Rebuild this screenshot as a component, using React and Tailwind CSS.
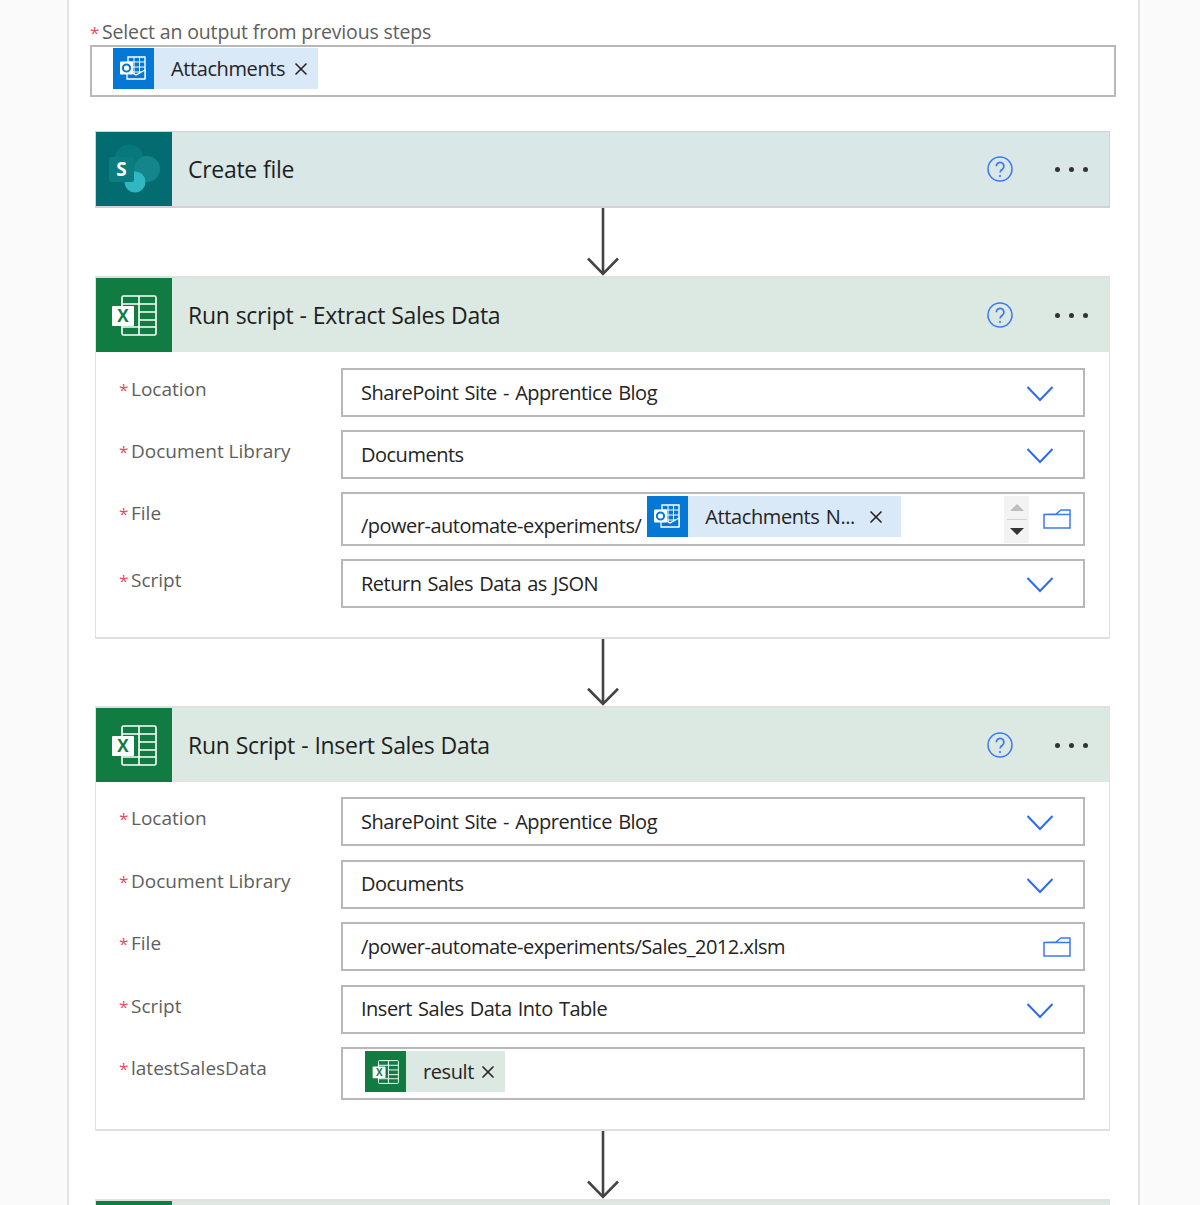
import { X } from 'lucide-react';

const OutlookIcon = ({ className }) => (
  <svg viewBox="0 0 41 41" className={className}>
    <rect width="41" height="41" fill="#0478d4" />
    <g fill="none" stroke="#fff" strokeWidth="1.4">
      <path d="M15 9h17v21H15z" />
      <path d="M21 9v21M26.5 9v21M15 14h17M15 19h17M15 24h17" strokeWidth="1" />
    </g>
    <path d="M14 31V22l9 5 9-5v9H14z" fill="#0478d4" stroke="#fff" strokeWidth="1.3" />
    <rect x="7" y="13.5" width="13" height="13" rx="1" fill="#fff" />
    <circle cx="13.5" cy="20" r="3.6" fill="none" stroke="#0478d4" strokeWidth="2" />
  </svg>
);

const ExcelMark = ({ className }) => (
  <svg viewBox="0 0 46 41" className={className}>
    <g fill="none" stroke="#fff" strokeWidth="1.6">
      <rect x="11" y="1" width="34" height="39" rx="1.5" />
      <path d="M28 1v39M28 9h17M28 17h17M28 25h17M28 32h17M11 32h17M11 9h17" />
    </g>
    <rect x="1" y="11" width="22" height="20" rx="1" fill="#fff" />
    <text x="12" y="27" textAnchor="middle" fontSize="17" fontWeight="700" fill="#107c41" fontFamily="'Open Sans', sans-serif">X</text>
  </svg>
);

const SharePointIcon = ({ className }) => (
  <svg viewBox="0 0 76 74" className={className}>
    <rect width="76" height="74" fill="#036c70" />
    <circle cx="33" cy="27" r="14.5" fill="#07787c" />
    <circle cx="51" cy="37" r="13" fill="#14868b" />
    <circle cx="39" cy="50" r="10.5" fill="#2fb8c2" />
    <rect x="13" y="25" width="25" height="25" rx="2" fill="#0b7d81" />
    <text x="25.5" y="44" textAnchor="middle" fontSize="19" fontWeight="700" fill="#fff" fontFamily="'Open Sans', sans-serif">S</text>
  </svg>
);

const Chevron = () => (
  <svg viewBox="0 0 28 18" className="mt-[3px] h-[18px] w-[28px] shrink-0" fill="none" stroke="#2c6cf0" strokeWidth="2">
    <path d="M1.5 2 14 15 26.5 2" />
  </svg>
);

const HelpIcon = () => (
  <svg viewBox="0 0 26 26" className="h-[26px] w-[26px]" fill="none" stroke="#3b78f2" strokeWidth="1.5">
    <circle cx="13" cy="13" r="12" />
    <path d="M9.3 10.3a3.8 3.8 0 1 1 6 3c-1.5 1-2.2 1.7-2.2 3.3" strokeWidth="1.7" />
    <circle cx="13" cy="20" r="1.1" fill="#3b78f2" stroke="none" />
  </svg>
);

const FolderIcon = () => (
  <svg viewBox="0 0 28 20" className="h-[20px] w-[28px] shrink-0" fill="none" stroke="#3b78f2" strokeWidth="1.5">
    <path d="M1 5.5h26V19H1zM1 5.5 13 5l5-4h9v4.5" />
  </svg>
);

const Chip = ({ icon, label, bg, width, closeGap }) => (
  <div className={`flex h-[41px] items-center ${bg} ${width}`}>
    {icon}
    <span className="ml-[17px] text-[20px] leading-none tracking-[-0.4px] text-[#252423]">{label}</span>
    <X className={`${closeGap} h-[20px] w-[20px] text-[#252423]`} strokeWidth={2} />
  </div>
);

const OutlookChip = ({ label, width, closeGap }) => (
  <Chip icon={<OutlookIcon className="h-[41px] w-[41px] shrink-0" />} label={label} bg="bg-[#d9e9f8]" width={width} closeGap={closeGap} />
);

const Arrow = ({ h }) => (
  <div className={`flex justify-center ${h}`}>
    <svg viewBox="0 0 34 66" className="h-full w-[34px]" preserveAspectRatio="none" fill="none" stroke="#444" strokeWidth="2.6">
      <path d="M17 0v64M2 49l15 15 15-15" />
    </svg>
  </div>
);

const CardHeader = ({ icon, title, bg, iconBg }) => (
  <div className={`flex h-[74px] items-center ${bg}`}>
    <div className={`flex h-full w-[76px] shrink-0 items-center justify-center ${iconBg}`}>{icon}</div>
    <div className="ml-[16px] mt-[1px] text-[23px] tracking-[-0.3px] text-[#1f1f1f] [word-spacing:0.5px]">{title}</div>
    <div className="ml-auto flex items-center">
      <HelpIcon />
      <div className="ml-[42px] mr-[21px] flex gap-[9px]">
        <span className="h-[5px] w-[5px] rounded-full bg-[#333]" />
        <span className="h-[5px] w-[5px] rounded-full bg-[#333]" />
        <span className="h-[5px] w-[5px] rounded-full bg-[#333]" />
      </div>
    </div>
  </div>
);

const Field = ({ label, h = 'h-[49px]', children, className = '' }) => (
  <div className="flex">
    <div className="ml-[23px] w-[222px] shrink-0 pt-[7px] text-[19px] leading-[28px] text-[#605e5c]">
      <span className="inline-block w-[12px] text-[17px] text-[#e04f5f]">*</span>{label}
    </div>
    <div className={`flex w-[744px] items-center border-2 border-[#b8b8b8] pl-[18px] pr-[12px] text-[20px] tracking-[-0.5px] text-[#252423] [word-spacing:1.5px] ${h} ${className}`}>
      {children}
    </div>
  </div>
);

const Select = ({ label, value }) => (
  <Field label={label}>
    <span className="flex-1">{value}</span>
    <span className="mr-[17px]"><Chevron /></span>
  </Field>
);

const excelHeader = <ExcelMark className="h-[41px] w-[46px]" />;

export default function App() {
  return (
    <div className="h-[1205px] overflow-hidden bg-[#fafafa] font-['Open_Sans',sans-serif]">
      <div className="ml-[67px] h-full w-[1073px] border-x-2 border-[#e3e3e3] bg-white">
        <div className="pl-[21px] pt-[20px]">
          <div className="h-[25px] text-[19.5px] leading-[24px] tracking-[-0.15px] text-[#605e5c]">
            <span className="inline-block w-[12px] text-[17px] text-[#e04f5f]">*</span>Select an output from previous steps
          </div>
          <div className="flex h-[52px] w-[1026px] border-2 border-[#b8b8b8] pl-[21px] pt-[1px]">
            <OutlookChip label="Attachments" width="w-[205px]" closeGap="ml-[6px]" />
          </div>
        </div>

        <div className="ml-[26px] mt-[34px] w-[1015px]">
          <div className="border-x border-b-2 border-t border-[#d2d2d2]">
            <CardHeader icon={<SharePointIcon className="h-full w-full" />} title="Create file" bg="bg-[#d9e7e7]" iconBg="bg-[#036c70]" />
          </div>
          <Arrow h="h-[68px]" />

          <div className="border-x border-y-2 border-[#e0e0e0]">
            <CardHeader icon={excelHeader} title="Run script - Extract Sales Data" bg="bg-[#dce9e2]" iconBg="bg-[#107c41]" />
            <div className="flex flex-col gap-[13px] pb-[29px] pt-[16px]">
              <Select label="Location" value="SharePoint Site - Apprentice Blog" />
              <Select label="Document Library" value="Documents" />
              <Field label="File" h="h-[54px]">
                <span className="mt-[14px] whitespace-nowrap">/power-automate-experiments/</span>
                <div className="ml-[6px] self-start pt-[2px]">
                  <OutlookChip label="Attachments N..." width="w-[254px]" closeGap="ml-[11px]" />
                </div>
                <div className="ml-auto mr-[14px] flex h-[47px] w-[25px] flex-col items-center justify-between self-center bg-[#f3f3f3] py-[8px]">
                  <span className="h-0 w-0 border-x-[7px] border-b-[7px] border-x-transparent border-b-[#bdbdbd]" />
                  <span className="h-px w-[20px] bg-[#d4d4d4]" />
                  <span className="h-0 w-0 border-x-[7px] border-t-[7px] border-x-transparent border-t-[#333]" />
                </div>
                <FolderIcon />
              </Field>
              <Select label="Script" value="Return Sales Data as JSON" />
            </div>
          </div>
          <Arrow h="h-[67px]" />

          <div className="border-x border-y-2 border-[#e0e0e0]">
            <CardHeader icon={excelHeader} title="Run Script - Insert Sales Data" bg="bg-[#dce9e2]" iconBg="bg-[#107c41]" />
            <div className="flex flex-col gap-[13.5px] pb-[29px] pt-[15px]">
              <Select label="Location" value="SharePoint Site - Apprentice Blog" />
              <Select label="Document Library" value="Documents" />
              <Field label="File">
                <span className="flex-1">/power-automate-experiments/Sales_2012.xlsm</span>
                <FolderIcon />
              </Field>
              <Select label="Script" value="Insert Sales Data Into Table" />
              <Field label="latestSalesData" h="h-[53px]" className="!pl-[22px]">
                <div className="self-start pt-[2px]">
                  <Chip
                    icon={
                      <div className="flex h-[41px] w-[41px] shrink-0 items-center justify-center bg-[#107c41]">
                        <ExcelMark className="h-[24px] w-[27px]" />
                      </div>
                    }
                    label="result"
                    bg="bg-[#dce9e2]"
                    width="w-[140px]"
                    closeGap="ml-[4px]"
                  />
                </div>
              </Field>
            </div>
          </div>
          <Arrow h="h-[68px]" />

          <div className="border-x border-y-2 border-[#e0e0e0]">
            <div className="flex h-[74px] bg-[#dce9e2]">
              <div className="w-[76px] bg-[#107c41]" />
            </div>
          </div>
        </div>
      </div>
    </div>
  );
}
